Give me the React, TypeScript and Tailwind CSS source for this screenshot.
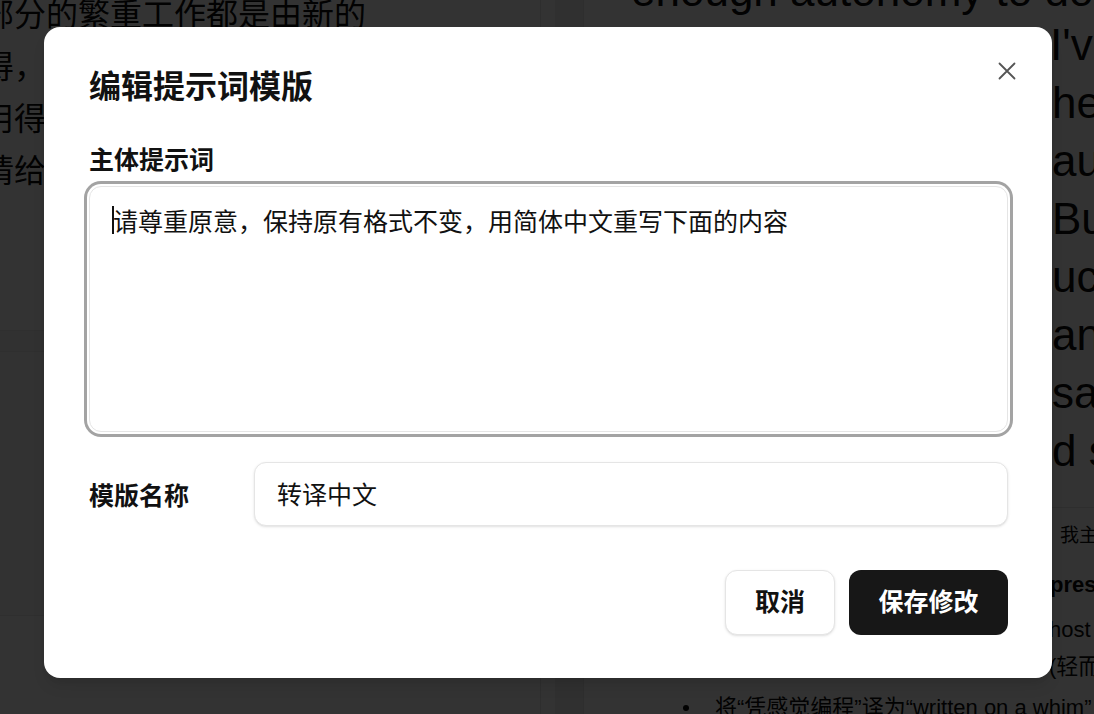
import React from "react";

function CloseIcon() {
  return (
    <svg width="18" height="18" viewBox="0 0 18 18" fill="none" aria-hidden="true">
      <path d="M1.5 1.5 L16.5 16.5 M16.5 1.5 L1.5 16.5" stroke="#555555" strokeWidth="1.8" strokeLinecap="round" />
    </svg>
  );
}

function BigLine({ frag, w = "w-[421px]" }: { frag: string; w?: string }) {
  return (
    <div className="flex whitespace-nowrap">
      <span className={`${w} shrink-0`} />
      <span>{frag}</span>
    </div>
  );
}

export default function App() {
  return (
    <div className="relative h-[714px] w-[1094px] overflow-hidden bg-white text-[#0a0a0a] font-['Liberation_Sans','Noto_Sans_CJK_SC',sans-serif]">
      {/* Background page */}
      <div className="flex h-full">
        {/* Left panel */}
        <div className="flex w-[541px] shrink-0 flex-col border-r border-[#e5e5e5]">
          <div className="h-[330px] overflow-hidden">
            <div className="-ml-[18px] -mt-[14px] whitespace-nowrap text-[32px] leading-[52px] font-['Noto_Sans_CJK_SC',sans-serif]">
              <p>部分的繁重工作都是由新的</p>
              <p>得，编程的门槛被大幅降低</p>
              <p>用得上的工具越来越多</p>
              <p>请给出你的理解</p>
            </div>
          </div>
          <div className="h-[22px] border-y border-[#e8e8e8] bg-[#f6f6f6]" />
          <div className="h-[263px] bg-[#f8f8f8]" />
          <div className="flex-1 border-t border-[#e8e8e8]" />
        </div>
        <div className="w-[14px] shrink-0 bg-[#fdfdfd]" />
        <div className="w-[28px] shrink-0 bg-[#ededed]" />
        {/* Right panel */}
        <div className="flex-1 overflow-hidden border-l border-[#e5e5e5] pl-[47px]">
          <div className="-mt-[38px] text-[44px] leading-[58px]">
            <div className="-mb-[4px] whitespace-nowrap">enough autonomy to do the work</div>
            <BigLine frag="I've got" w="w-[419px]" />
            <BigLine frag="he rest" />
            <BigLine frag="autonomously" />
            <BigLine frag="But" />
            <BigLine frag="uch work" />
            <BigLine frag="anyone" />
            <BigLine frag="safety" />
            <BigLine frag="d so on" />
          </div>
          <div className="mt-[27px] border-t border-[#e5e5e5] pt-[12px]">
            <div className="flex whitespace-nowrap text-[19px] leading-[27px] font-['Noto_Sans_CJK_SC',sans-serif]">
              <span className="w-[429px] shrink-0" />
              <span>我主要做了这些调整</span>
            </div>
            <div className="mt-[23px] flex whitespace-nowrap text-[22px] font-bold leading-[30px]">
              <span className="w-[419px] shrink-0" />
              <span>presentation</span>
            </div>
            <div className="mt-[11px] text-[22px] leading-[37px]">
              <div className="flex items-start">
                <span className="mt-[16px] ml-[52px] h-[6px] w-[6px] shrink-0 rounded-full bg-[#0a0a0a]" />
                <div className="ml-[26px] whitespace-nowrap">
                  <div className="flex">
                    <span className="w-[334px] shrink-0 overflow-hidden">将“vibe coding”译为“凭感觉</span>
                    <span>host</span>
                  </div>
                  <div className="flex">
                    <span className="w-[334px] shrink-0 overflow-hidden">编程”，强调不看代码也能</span>
                    <span>(轻而易举)</span>
                  </div>
                </div>
              </div>
              <div className="mt-[4px] flex items-start">
                <span className="mt-[16px] ml-[52px] h-[6px] w-[6px] shrink-0 rounded-full bg-[#0a0a0a]" />
                <div className="ml-[26px] whitespace-nowrap">将“凭感觉编程”译为“written on a whim”</div>
              </div>
            </div>
          </div>
        </div>
      </div>

      {/* Overlay */}
      <div className="absolute inset-0 bg-black/80" />

      {/* Dialog */}
      <div className="absolute left-[44px] top-[27px] w-[1008px] rounded-[16px] bg-white pb-[43px] pl-[45px] pr-[44px] pt-[37px] shadow-lg font-['Noto_Sans_CJK_SC',sans-serif] text-[#111111]">
        <button className="absolute right-[36px] top-[35px] flex h-[18px] w-[18px] items-center justify-center">
          <CloseIcon />
        </button>
        <h2 className="text-[32px] font-bold leading-[40px]">编辑提示词模版</h2>
        <div className="mt-[39px] text-[25px] font-semibold leading-[30px]">主体提示词</div>
        <div className="relative mt-[13px] h-[246px] rounded-[12px] border border-[#e5e5e5] bg-white px-[22px] pt-[14px] ring-[3px] ring-[#a3a3a3] ring-offset-2 ring-offset-white">
          <span className="absolute left-[22px] top-[19px] h-[28px] w-[2px] bg-[#111111]" />
          <p className="pl-[1px] text-[25px] leading-[38px]">请尊重原意，保持原有格式不变，用简体中文重写下面的内容</p>
        </div>
        <div className="mt-[30px] flex items-center">
          <div className="w-[165px] shrink-0 text-[25px] font-semibold leading-[30px]">模版名称</div>
          <div className="flex h-[64px] flex-1 items-center rounded-[12px] border border-[#e5e5e5] bg-white px-[22px] text-[25px] shadow-sm">
            转译中文
          </div>
        </div>
        <div className="mt-[44px] flex justify-end gap-[14px]">
          <button className="h-[65px] w-[110px] rounded-[12px] border border-[#e5e5e5] bg-white pb-[3px] text-[25px] font-semibold text-[#111111] shadow-sm">
            取消
          </button>
          <button className="h-[65px] w-[159px] rounded-[12px] bg-[#171717] pb-[3px] text-[25px] font-semibold text-white">
            保存修改
          </button>
        </div>
      </div>
    </div>
  );
}
